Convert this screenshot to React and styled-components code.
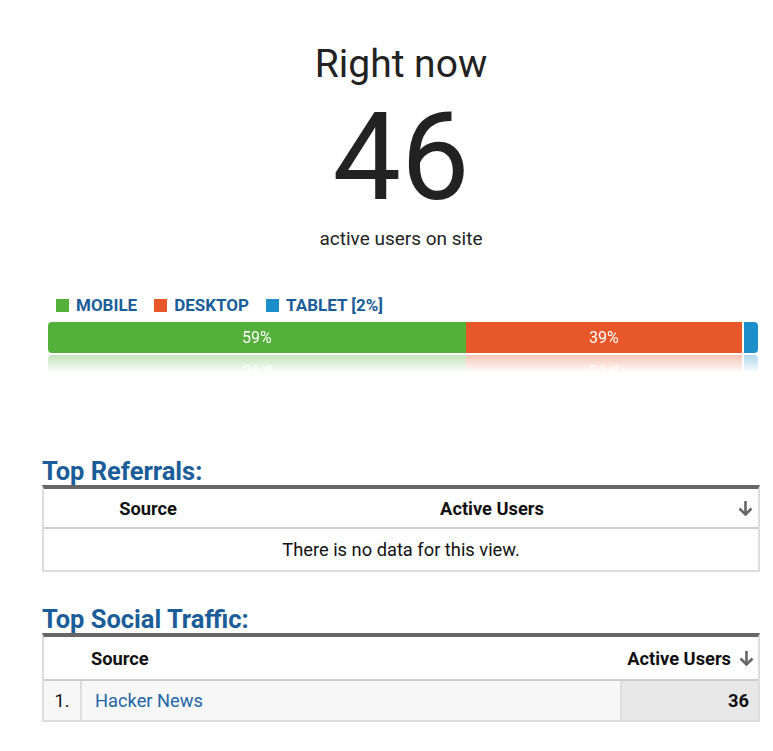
import React from 'react';
import styled, { createGlobalStyle } from 'styled-components';

const COLORS = {
  text: '#222222',
  heading: '#1b5d98',
  link: '#1f66a6',
  mobile: '#54b03a',
  desktop: '#e8572a',
  tablet: '#1c8fca',
  rule: '#666666',
  border: '#dddddd',
};

const GlobalStyle = createGlobalStyle`
  body {
    margin: 0;
    background: #ffffff;
    font-family: Roboto, "Liberation Sans", sans-serif;
    color: ${COLORS.text};
  }
`;

const devices = [
  { key: 'mobile', label: 'MOBILE', share: 59, color: COLORS.mobile },
  { key: 'desktop', label: 'DESKTOP', share: 39, color: COLORS.desktop },
  { key: 'tablet', label: 'TABLET [2%]', share: 2, color: COLORS.tablet, small: true },
];

const ArrowDown = () => (
  <svg width="15" height="16" viewBox="0 0 15 16" fill="none" stroke="#666" strokeWidth="2.6">
    <path d="M7.5 1v13" />
    <path d="M1.5 8.5l6 6 6-6" />
  </svg>
);

export default function App() {
  return (
    <>
      <GlobalStyle />
      <Page>
        <Hero>
          <Title>Right now</Title>
          <BigNumber>46</BigNumber>
          <Subtitle>active users on site</Subtitle>
        </Hero>

        <Legend>
          {devices.map(d => (
            <LegendItem key={d.key}>
              <Swatch color={d.color} />
              {d.label}
            </LegendItem>
          ))}
        </Legend>

        <Bar>
          {devices.map(d => (
            <Segment key={d.key} color={d.color} gap={d.small} style={{ width: `${d.share}%` }}>
              {!d.small && `${d.share}%`}
            </Segment>
          ))}
        </Bar>

        <SectionTitle first>Top Referrals:</SectionTitle>
        <Table>
          <RefHeader>
            <HeadCell align="center">Source</HeadCell>
            <HeadCell align="center">Active Users</HeadCell>
            <HeadCell align="center"><ArrowDown /></HeadCell>
          </RefHeader>
          <EmptyRow>There is no data for this view.</EmptyRow>
        </Table>

        <SectionTitle>Top Social Traffic:</SectionTitle>
        <Table>
          <SocialHeader>
            <HeadCell />
            <HeadCell pad="9px">Source</HeadCell>
            <HeadCell align="right">
              Active Users <ArrowDown />
            </HeadCell>
          </SocialHeader>
          <SocialRow>
            <IndexCell>1.</IndexCell>
            <SourceCell><Link href="#">Hacker News</Link></SourceCell>
            <ValueCell>36</ValueCell>
          </SocialRow>
        </Table>
      </Page>
    </>
  );
}

const Page = styled.div`
  width: 773px;
  box-sizing: border-box;
  padding: 42px 13px 40px 42px;
`;

const Hero = styled.div`
  display: flex;
  flex-direction: column;
  align-items: center;
`;

const Title = styled.h1`
  margin: 0;
  font-size: 39px;
  line-height: 44px;
  font-weight: 400;
  color: ${COLORS.text};
`;

const BigNumber = styled.div`
  margin-top: 22px;
  font-size: 122px;
  line-height: 100px;
  font-weight: 400;
  color: ${COLORS.text};
`;

const Subtitle = styled.div`
  margin-top: 20px;
  font-size: 19px;
  line-height: 22px;
  color: ${COLORS.text};
`;

const Legend = styled.div`
  display: flex;
  gap: 17px;
  margin: 45px 0 0 14px;
`;

const LegendItem = styled.div`
  display: flex;
  align-items: center;
  gap: 7px;
  font-size: 17px;
  line-height: 20px;
  font-weight: 700;
  color: ${COLORS.heading};
`;

const Swatch = styled.span`
  width: 13px;
  height: 13px;
  background: ${props => props.color};
`;

const Bar = styled.div`
  display: flex;
  height: 31px;
  margin: 7px 2px 0 6px;
  border-radius: 4px;
  overflow: hidden;
  -webkit-box-reflect: below 2px linear-gradient(transparent 42%, rgba(255, 255, 255, 0.35));
`;

const Segment = styled.div`
  display: flex;
  align-items: center;
  justify-content: center;
  background: ${props => props.color};
  color: #ffffff;
  font-size: 16px;
  border-left: ${props => (props.gap ? '2px solid #ffffff' : 'none')};
`;

const SectionTitle = styled.h2`
  margin: ${props => (props.first ? '104px' : '33px')} 0 0;
  font-size: 25.5px;
  line-height: 28px;
  font-weight: 700;
  color: ${COLORS.heading};
`;

const Table = styled.div`
  border-top: 4px solid ${COLORS.rule};
  border-left: 2px solid ${COLORS.border};
  border-right: 2px solid ${COLORS.border};
  border-bottom: 2px solid ${COLORS.border};
  font-size: 18.3px;
`;

const RefHeader = styled.div`
  display: grid;
  grid-template-columns: 208px 1fr 26px;
  height: 38px;
  border-bottom: 2px solid #cccccc;
`;

const SocialHeader = styled.div`
  display: grid;
  grid-template-columns: 38px 1fr 138px;
  height: 42px;
  border-bottom: 2px solid #cccccc;
`;

const HeadCell = styled.div`
  display: flex;
  align-items: center;
  justify-content: ${props =>
    props.align === 'center' ? 'center' : props.align === 'right' ? 'flex-end' : 'flex-start'};
  gap: 8px;
  padding: 0 ${props => (props.align === 'right' ? '4px' : '0')} 0 ${props => props.pad || '0'};
  font-weight: 700;
  color: #111111;
`;

const EmptyRow = styled.div`
  height: 41px;
  display: flex;
  align-items: center;
  justify-content: center;
  color: #111111;
`;

const SocialRow = styled.div`
  display: grid;
  grid-template-columns: 38px 1fr 138px;
  height: 39px;
  background: #f7f7f7;
`;

const IndexCell = styled.div`
  display: flex;
  align-items: center;
  justify-content: center;
  border-right: 2px solid ${COLORS.border};
  color: #111111;
`;

const SourceCell = styled.div`
  display: flex;
  align-items: center;
  padding-left: 13px;
`;

const ValueCell = styled.div`
  display: flex;
  align-items: center;
  justify-content: flex-end;
  padding-right: 9px;
  background: #e8e8e8;
  border-left: 2px solid ${COLORS.border};
  font-weight: 700;
  color: #111111;
`;

const Link = styled.a`
  color: ${COLORS.link};
  text-decoration: none;
`;
